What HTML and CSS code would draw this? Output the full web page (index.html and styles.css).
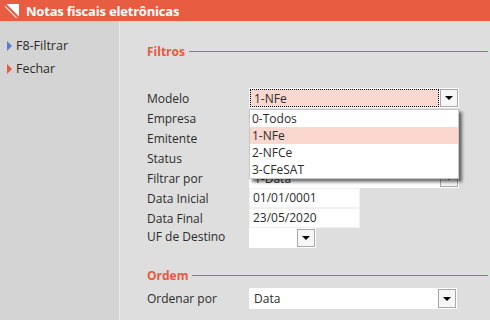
FILE: index.html
```html
<!DOCTYPE html>
<html lang="pt-BR">
<head>
    <meta charset="UTF-8">
    <title>Notas fiscais eletrônicas</title>
    <link rel="stylesheet" href="styles.css">
</head>
<body>
    <div class="window">
        <div class="titlebar">
            <svg class="logo" width="16" height="16" viewBox="0 0 16 16">
                <rect x="1" y="1" width="14" height="14" fill="#fff"/>
                <path d="M1 4 L12 15 L1 15 Z" fill="#e85c41"/>
                <path d="M1 1 L15 15" stroke="#e85c41" stroke-width="2.2"/>
            </svg>
            <span class="title">Notas fiscais eletrônicas</span>
        </div>

        <div class="content">
            <div class="sidebar">
                <div class="action"><span class="tri blue"></span>F8-Filtrar</div>
                <div class="action"><span class="tri orange"></span>Fechar</div>
            </div>

            <div class="main">
                <div class="section-title">Filtros</div>

                <div class="form">
                    <div class="label">Modelo</div>
                    <div class="field">
                        <div class="select focused">
                            <div class="value">1-NFe</div>
                            <div class="arrow"><span class="caret"></span></div>
                        </div>
                        <div class="dropdown">
                            <div class="option">0-Todos</div>
                            <div class="option selected">1-NFe</div>
                            <div class="option">2-NFCe</div>
                            <div class="option">3-CFeSAT</div>
                        </div>
                    </div>

                    <div class="label">Empresa</div>
                    <div class="field"></div>

                    <div class="label">Emitente</div>
                    <div class="field"></div>

                    <div class="label">Status</div>
                    <div class="field"></div>

                    <div class="label">Filtrar por</div>
                    <div class="field">
                        <div class="select">
                            <div class="value">1-Data</div>
                            <div class="arrow"><span class="caret"></span></div>
                        </div>
                    </div>

                    <div class="label">Data Inicial</div>
                    <div class="field"><div class="input">01/01/0001</div></div>

                    <div class="label">Data Final</div>
                    <div class="field"><div class="input">23/05/2020</div></div>

                    <div class="label top">UF de Destino</div>
                    <div class="field">
                        <div class="select small">
                            <div class="value"></div>
                            <div class="arrow"><span class="caret"></span></div>
                        </div>
                    </div>
                </div>

                <div class="section-title ordem">Ordem</div>

                <div class="form order">
                    <div class="label">Ordenar por</div>
                    <div class="field">
                        <div class="select wide">
                            <div class="value">Data</div>
                            <div class="arrow"><span class="caret"></span></div>
                        </div>
                    </div>
                </div>
            </div>
        </div>
    </div>
</body>
</html>
```

FILE: styles.css
```css
body {
    margin: 0;
    font-family: "Open Sans", "Noto Sans", Arial, sans-serif;
    font-size: 12px;
    color: #2b2b2b;
    background-color: #dedede;
}

.window {
    display: flex;
    flex-direction: column;
    width: 490px;
    height: 320px;
    overflow: hidden;
}

.titlebar {
    display: flex;
    align-items: center;
    gap: 6px;
    height: 21px;
    padding-left: 4px;
    background-color: #e85c41;
}

.logo {
    display: block;
}

.title {
    color: #fff;
    font-weight: bold;
    font-size: 13px;
    letter-spacing: -0.2px;
}

.content {
    display: flex;
    flex: 1;
}

.sidebar {
    width: 120px;
    border-right: 1px solid #e9e9e9;
    background-color: #d4d4d4;
    padding-top: 13px;
    box-sizing: border-box;
}

.action {
    display: flex;
    align-items: center;
    gap: 4px;
    height: 23px;
    padding-left: 7px;
    font-size: 12.5px;
    color: #2a2a2a;
}

.tri {
    width: 0;
    height: 0;
    border-top: 5px solid transparent;
    border-bottom: 5px solid transparent;
    border-left: 5px solid;
}

.tri.blue {
    border-left-color: #5b7bd8;
}

.tri.orange {
    border-left-color: #e8583d;
}

.main {
    flex: 1;
    padding: 23px 2px 0 27px;
}

.section-title {
    display: flex;
    align-items: center;
    gap: 4px;
    height: 14px;
    color: #e8583d;
    font-weight: bold;
}

.section-title::after {
    content: "";
    flex: 1;
    height: 1px;
    background-color: #e8583d;
}

.form {
    display: grid;
    grid-template-columns: 102px 1fr;
    grid-auto-rows: 20px;
    margin-top: 30px;
}

.label {
    display: flex;
    align-items: center;
}

.label.top {
    align-items: flex-start;
}

.field {
    position: relative;
}

.select {
    display: flex;
    gap: 1px;
    width: 210px;
    height: 20px;
    padding: 1px;
    box-sizing: border-box;
    background-color: #fff;
}

.select .value {
    flex: 1;
    padding-left: 3px;
    line-height: 17px;
    border: 1px solid transparent;
}

.select.focused .value {
    background-color: #fad7cf;
    border: 1px dotted #000;
}

.arrow {
    display: flex;
    align-items: center;
    justify-content: center;
    width: 16px;
    border: 1px solid #a8a8a8;
    background-color: #f6f6f6;
}

.caret {
    width: 0;
    height: 0;
    border-left: 4px solid transparent;
    border-right: 4px solid transparent;
    border-top: 4px solid #000;
}

.select.small {
    width: 67px;
}

.select.wide {
    width: 208px;
    height: 21px;
}

.input {
    width: 111px;
    height: 20px;
    box-sizing: border-box;
    padding-left: 3px;
    line-height: 18px;
    background-color: #fff;
    border: 1px solid #f0f0f0;
}

.dropdown {
    position: absolute;
    top: 21px;
    left: 0;
    width: 210px;
    box-sizing: border-box;
    border: 1px solid #c8c8c8;
    background-color: #fff;
    box-shadow: 3px 3px 3px rgba(0, 0, 0, 0.55);
    z-index: 2;
}

.option {
    height: 17px;
    line-height: 17px;
    padding-left: 2px;
}

.option.selected {
    background-color: #fad7cf;
}

.ordem {
    margin-top: 20px;
}

.form.order {
    margin-top: 6px;
    grid-auto-rows: 21px;
}
```
